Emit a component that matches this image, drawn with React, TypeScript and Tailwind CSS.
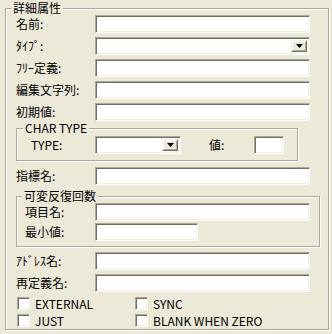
import React from 'react';

const font = "font-['Noto_Sans_CJK_JP','Noto_Sans',sans-serif] text-[12px] leading-[14px] text-black";

// sunken 3D edit box, XP classic palette
const sunken =
  'bg-white border border-t-[#aca899] border-l-[#aca899] border-b-white border-r-white shadow-[inset_1px_1px_0_#716f64,inset_-1px_-1px_0_#f1efe2]';

const etched =
  'border border-[#aca899] shadow-[inset_1px_1px_0_#ffffff,1px_1px_0_#ffffff]';

const Field: React.FC<{ width: string; combo?: boolean }> = ({ width, combo }) => (
  <div className={`${sunken} ${width} h-[18px] flex justify-end items-stretch p-[2px]`}>
    {combo && (
      <div className="w-[16px] bg-[#ece9d8] border border-t-[#f1efe2] border-l-[#f1efe2] border-b-[#716f64] border-r-[#716f64] shadow-[inset_1px_1px_0_#ffffff,inset_-1px_-1px_0_#aca899] flex items-center justify-center">
        <svg width="7" height="4" viewBox="0 0 7 4">
          <path d="M0 0h7L3.5 4z" fill="#000" />
        </svg>
      </div>
    )}
  </div>
);

const Row: React.FC<{ label: string; className?: string; labelClass?: string; children: React.ReactNode }> = ({
  label,
  className = '',
  labelClass = 'w-[79px]',
  children,
}) => (
  <div className={`flex items-center h-[18px] ${className}`}>
    <span className={`${labelClass} whitespace-nowrap`}>{label}</span>
    {children}
  </div>
);

const Check: React.FC<{ label: string; className?: string }> = ({ label, className = '' }) => (
  <div className={`flex items-center h-[13px] ${className}`}>
    <div className={`${sunken} w-[13px] h-[13px] shrink-0`} />
    <span className="ml-[5px] whitespace-nowrap">{label}</span>
  </div>
);

export default function App() {
  return (
    <div className={`${font} w-[332px] h-[334px] bg-[#ece9d8] pt-[1px] pl-[5px] pr-[3px] overflow-hidden`}>
      <fieldset className={`${etched} w-[324px] p-0 m-0`}>
        <legend className="ml-[5px] px-[2px] bg-[#ece9d8]">詳細属性</legend>
        <div className="pl-[10px] pb-[2px]">
          <Row label="名前:">
            <Field width="w-[215px]" />
          </Row>
          <Row label="ﾀｲﾌﾟ:" className="mt-[4px]">
            <Field width="w-[215px]" combo />
          </Row>
          <Row label="ﾌﾘｰ定義:" className="mt-[4px]">
            <Field width="w-[215px]" />
          </Row>
          <Row label="編集文字列:" className="mt-[4px]">
            <Field width="w-[215px]" />
          </Row>
          <Row label="初期値:" className="mt-[4px]">
            <Field width="w-[215px]" />
          </Row>

          {/* CHAR TYPE group */}
          <fieldset className={`${etched} w-[282px] m-0 p-0`}>
            <legend className="ml-[6px] px-[2px] bg-[#ece9d8]">CHAR TYPE</legend>
            <div className="pt-[1px] pb-[6px]">
              <Row label="TYPE:" labelClass="w-[78px] pl-[14px]">
                <Field width="w-[86px]" combo />
                <span className="ml-[28px] w-[45px]">値:</span>
                <Field width="w-[30px]" />
              </Row>
            </div>
          </fieldset>

          <Row label="指標名:" className="mt-[6px]">
            <Field width="w-[215px]" />
          </Row>

          {/* repeat count group */}
          <fieldset className={`${etched} w-[304px] m-0 p-0 mt-[4px]`}>
            <legend className="ml-[5px] px-[2px] bg-[#ece9d8]">可変反復回数</legend>
            <div className="pb-[5px]">
              <Row label="項目名:" labelClass="w-[78px] pl-[8px]">
                <Field width="w-[215px]" />
              </Row>
              <Row label="最小値:" labelClass="w-[78px] pl-[8px]" className="mt-[2px]">
                <Field width="w-[103px]" />
              </Row>
            </div>
          </fieldset>

          <Row label="ｱﾄﾞﾚｽ名:" className="mt-[5px]">
            <Field width="w-[215px]" />
          </Row>
          <Row label="再定義名:" className="mt-[4px]">
            <Field width="w-[215px]" />
          </Row>

          <div className="grid grid-cols-[118px_1fr] gap-y-[4px] mt-[5px] ml-[1px]">
            <Check label="EXTERNAL" />
            <Check label="SYNC" />
            <Check label="JUST" />
            <Check label="BLANK WHEN ZERO" />
          </div>
        </div>
      </fieldset>
    </div>
  );
}
